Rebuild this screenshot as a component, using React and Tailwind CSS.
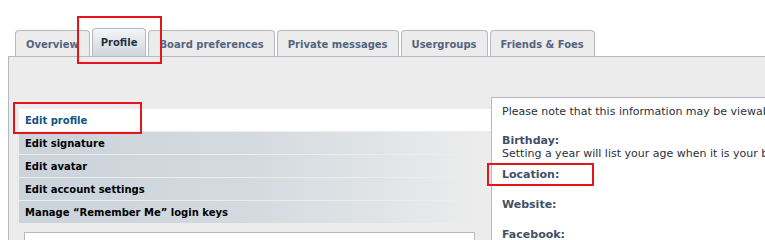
import React from "react";

const tabs = [
  { label: "Overview", active: false },
  { label: "Profile", active: true },
  { label: "Board preferences", active: false },
  { label: "Private messages", active: false },
  { label: "Usergroups", active: false },
  { label: "Friends & Foes", active: false },
];

const menu = [
  "Edit signature",
  "Edit avatar",
  "Edit account settings",
  "Manage \u201cRemember Me\u201d login keys",
];

const App = () => {
  return (
    <div
      className="relative w-[765px] h-[240px] overflow-hidden bg-white"
      style={{ fontFamily: '"DejaVu Sans", Verdana, sans-serif' }}
    >
      {/* tabs */}
      <div className="flex items-end gap-[2px] pl-[15px] pt-[27px] h-[56px]">
        {tabs.map((tab) =>
          tab.active ? (
            <div
              key={tab.label}
              className="h-[28px] px-[8px] flex items-center border border-b-0 border-[#b4bac0] rounded-t-[4px] bg-gradient-to-b from-[#f4f6f7] to-[#cfd6dc] text-[10px] font-bold text-[#28313f]"
            >
              {tab.label}
            </div>
          ) : (
            <div
              key={tab.label}
              className="h-[26px] px-[10px] pt-[1px] flex items-center border border-b-0 border-[#b4bac0] rounded-t-[4px] bg-[#ececec] text-[10px] font-bold text-[#536482]"
            >
              {tab.label}
            </div>
          )
        )}
      </div>

      {/* panel */}
      <div className="ml-[8px] h-[184px] bg-[#ececec] border-t border-l border-[#b4bac0] flex">
        <div className="w-[482px] shrink-0 pt-[52px] pl-[10px]">
          <div className="h-[22px] w-[472px] bg-white flex items-center pl-[6px] text-[10px] font-bold text-[#105289]">
            Edit profile
          </div>
          {menu.map((item) => (
            <div
              key={item}
              className="mt-[1px] h-[22px] w-[462px] bg-gradient-to-r from-[#cbd3db] via-[#d3dadf] to-[#ececec] flex items-center pl-[6px] text-[10px] font-bold text-[#000]"
            >
              {item}
            </div>
          ))}
          <div className="mt-[9px] ml-[5px] w-[451px] h-[20px] bg-white border border-b-0 border-[#b4bac0]"></div>
        </div>
        <div className="mt-[40px] flex-1 min-w-0 overflow-hidden bg-white border-t border-l border-[#b4bac0] pl-[10px] pt-[7px] text-[11px] text-[#28313f] whitespace-nowrap">
          <div className="leading-[14px]">Please note that this information may be viewable to other members.</div>
          <div className="mt-[15px] leading-[13px] font-bold text-[#425067]">Birthday:</div>
          <div className="leading-[13px]">Setting a year will list your age when it is your birthday.</div>
          <div className="mt-[8px] leading-[14px] font-bold text-[#425067]">Location:</div>
          <div className="mt-[16px] leading-[14px] font-bold text-[#425067]">Website:</div>
          <div className="mt-[16px] leading-[14px] font-bold text-[#425067]">Facebook:</div>
        </div>
      </div>

      {/* red annotation boxes */}
      <div className="absolute left-[77px] top-[16px] w-[85px] h-[48px] border-2 border-[#e8141b]"></div>
      <div className="absolute left-[13px] top-[102px] w-[129px] h-[32px] border-2 border-[#e8141b]"></div>
      <div className="absolute left-[487px] top-[163px] w-[107px] h-[23px] border-2 border-[#e8141b]"></div>
    </div>
  );
};

export default App;
